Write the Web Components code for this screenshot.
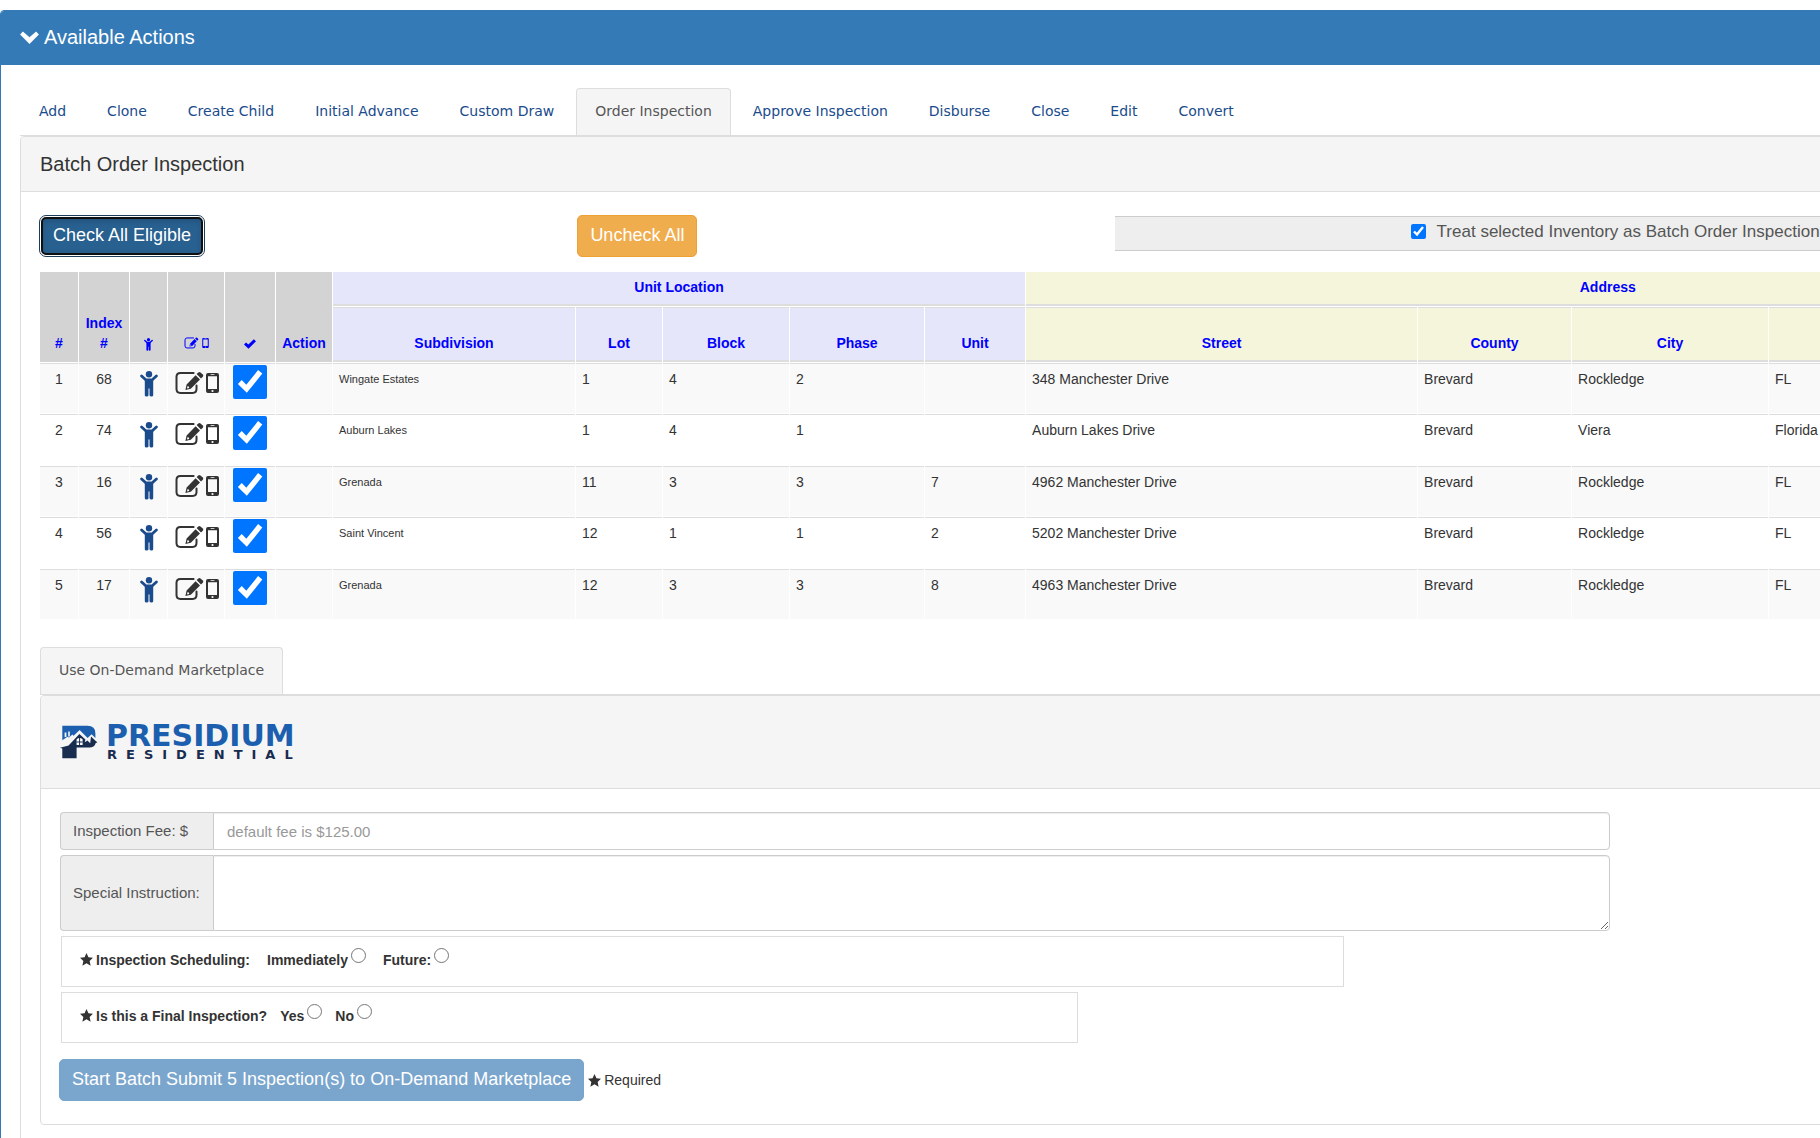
<!DOCTYPE html>
<html lang="en">
<head>
<meta charset="utf-8">
<title>Available Actions</title>
<style>
    html, body {
        height: 100%;
    }

    body {
        margin: 0;
        overflow: hidden;
        background: #fff;
        color: #333;
        font: 14px/20px "Liberation Sans", Arial, sans-serif;
    }
</style>
</head>
<body>
<batch-page></batch-page>

<script>
/* ---------- icons ---------- */
const ICONS = {
    chevron: {
        box: "0 0 19 13",
        art: `<path d="M2.9.4 9.5 6.2 16.1.4 18.9 3.4 9.5 13 .1 3.4Z"/>`
    },
    child: {
        box: "0 0 18 26",
        art: `<circle cx="9" cy="3.3" r="3.2"/>
              <path d="M1.6 5 6 9H12L16.4 5" fill="none" stroke="currentColor" stroke-width="2.8" stroke-linecap="round" stroke-linejoin="round"/>
              <path d="M4.8 8H13.2V24.2Q13.2 25.6 11.4 25.6T9.5 24.2V17.6H8.5V24.2Q8.5 25.6 6.6 25.6T4.8 24.2Z"/>`
    },
    edit: {
        box: "0 0 29 24",
        art: `<path d="M18.6 1.9H5.4Q1.5 1.9 1.5 5.8V18Q1.5 21.9 5.4 21.9H17.6Q21.5 21.9 21.5 18V14.6" fill="none" stroke="currentColor" stroke-width="2" stroke-linecap="round"/>
              <path fill-rule="evenodd" d="M10.4 19 11.6 13.4 20.6 4.2 25 8.4 15.8 17.8ZM12.4 15.2 12 17.4 14.2 17 13.9 15.6Z"/>
              <path d="M21.6 3.1 23.3 1.4Q24.4.4 25.5 1.4L27.8 3.6Q28.8 4.7 27.8 5.7L26 7.4Z"/>`
    },
    phone: {
        box: "0 0 13 20",
        art: `<path fill-rule="evenodd" d="M2 0H11Q13 0 13 2V18Q13 20 11 20H2Q0 20 0 18V2Q0 0 2 0ZM2 3.2V16H11V3.2ZM4.6 1.2V2H8.4V1.2ZM6.5 16.9A1.1 1.1 0 1 0 6.5 19.1 1.1 1.1 0 1 0 6.5 16.9Z"/>`
    },
    check: {
        box: "0 0 12 10",
        art: `<path d="M0 5.4 2 3.4 4.4 5.6 9.8.2 12 2.2 4.5 9.8Z"/>`
    },
    star: {
        box: "0 0 12 12",
        art: `<path d="M6 0 7.8 4 12 4.4 8.9 7.3 9.8 11.8 6 9.5 2.2 11.8 3.1 7.3 0 4.4 4.2 4Z"/>`
    }
};

class AppIcon extends HTMLElement {

    constructor() {
        super();
        this.shadowDOM = this.attachShadow({mode: "open"});
    }

    connectedCallback() {
        const icon = ICONS[this.getAttribute("name")];
        this.shadowDOM.innerHTML = `
        <style>
        :host {
            display: inline-block;
            flex: none;
            width: 13px;
            height: 13px;
        }

        svg {
            display: block;
            width: 100%;
            height: 100%;
            fill: currentColor;
        }
        </style>
        <svg viewBox="${icon.box}" aria-hidden="true">${icon.art}</svg>`;
    }
}

customElements.define("app-icon", AppIcon);

/* ---------- panel with heading ---------- */
class AppPanel extends HTMLElement {

    constructor() {
        super();
        this.shadowDOM = this.attachShadow({mode: "open"});
        this.shadowDOM.innerHTML = `
        <style>
        :host {
            display: block;
            border: 1px solid #ddd;
            border-radius: 4px;
            background: #fff;
        }

        :host([primary]) {
            border-color: #337ab7;
        }

        .heading {
            padding: 16px 19px;
            border-bottom: 1px solid #ddd;
            border-radius: 3px 3px 0 0;
            background: #f5f5f5;
            color: #333;
            font-size: 20px;
            line-height: 22px;
        }

        :host([primary]) .heading {
            padding: 15px 19px 17px;
            border-bottom: 0;
            background: #337ab7;
            color: #fff;
        }

        .body {
            padding: 23px 19px;
        }
        </style>
        <div class="heading"><slot name="heading"></slot></div>
        <div class="body"><slot></slot></div>`;
    }
}

customElements.define("app-panel", AppPanel);

/* ---------- tabs ---------- */
class TabStrip extends HTMLElement {

    constructor() {
        super();
        this.shadowDOM = this.attachShadow({mode: "open"});
        this.shadowDOM.innerHTML = `
        <style>
        :host {
            display: block;
            border-bottom: 1px solid #ddd;
        }

        nav {
            display: flex;
            gap: 3px;
        }
        </style>
        <nav><slot></slot></nav>`;
    }
}

customElements.define("tab-strip", TabStrip);

class TabLink extends HTMLElement {

    constructor() {
        super();
        this.shadowDOM = this.attachShadow({mode: "open"});
        this.shadowDOM.innerHTML = `
        <style>
        :host {
            display: block;
        }

        a {
            display: block;
            padding: 12px 18px 14px;
            border: 1px solid transparent;
            border-bottom: 0;
            border-radius: 4px 4px 0 0;
            color: #1a4b8c;
            font: 14px/20px "DejaVu Sans", Verdana, sans-serif;
            text-decoration: none;
            white-space: nowrap;
        }

        :host([active]) a {
            border-color: #ddd;
            background: #f5f5f5;
            color: #555;
        }
        </style>
        <a href="#"><slot></slot></a>`;
    }
}

customElements.define("tab-link", TabLink);

/* ---------- button ---------- */
class AppButton extends HTMLElement {

    constructor() {
        super();
        this.shadowDOM = this.attachShadow({mode: "open"});
        this.shadowDOM.innerHTML = `
        <style>
        :host {
            display: inline-block;
        }

        button {
            display: block;
            padding: 7px 12px 9px;
            border: 1px solid #2e6da4;
            border-radius: 5px;
            background: #337ab7;
            color: #fff;
            font: 18px/24px "Liberation Sans", Arial, sans-serif;
            white-space: nowrap;
        }

        button:disabled {
            border-color: #77a5cd;
            background: #7aa6ce;
        }

        :host([warning]) button {
            border-color: #eea236;
            background: #f0ad4e;
        }

        /* pressed and focused, with a double ring */
        :host([pressed]) button {
            border: 2px solid #101010;
            padding: 6px 10px 8px;
            background: #286090;
            box-shadow: inset 0 3px 5px rgba(0, 0, 0, .12);
            outline: 1px solid #1d3d5c;
            outline-offset: 1px;
            margin: 2px 1px;
            line-height: 20px;
        }
        </style>
        <button type="button" ${this.hasAttribute("disabled") ? "disabled" : ""}><slot></slot></button>`;
    }
}

customElements.define("app-button", AppButton);

/* ---------- treat-as-batch tick box ---------- */
class BatchToggle extends HTMLElement {

    constructor() {
        super();
        this.shadowDOM = this.attachShadow({mode: "open"});
        this.shadowDOM.innerHTML = `
        <style>
        :host {
            display: flex;
            justify-content: center;
            align-items: center;
            box-sizing: border-box;
            height: 35px;
            margin-top: 1px;
            padding: 0 74px 4px 0;
            border: solid #ccc;
            border-width: 1px 0;
            background: #eee;
            color: #555;
            font-size: 17px;
        }

        label {
            display: flex;
            align-items: center;
            gap: 11px;
            white-space: nowrap;
        }

        input {
            width: 15px;
            height: 15px;
            margin: 0;
        }
        </style>
        <label><input type="checkbox" checked><slot></slot></label>`;
    }
}

customElements.define("batch-toggle", BatchToggle);

/* ---------- inventory table ---------- */
const UNITS = [
    {index: 68, subdivision: "Wingate Estates", lot: 1, block: 4, phase: 2, unit: "", street: "348 Manchester Drive", city: "Rockledge", state: "FL"},
    {index: 74, subdivision: "Auburn Lakes", lot: 1, block: 4, phase: 1, unit: "", street: "Auburn Lakes Drive", city: "Viera", state: "Florida"},
    {index: 16, subdivision: "Grenada", lot: 11, block: 3, phase: 3, unit: 7, street: "4962 Manchester Drive", city: "Rockledge", state: "FL"},
    {index: 56, subdivision: "Saint Vincent", lot: 12, block: 1, phase: 1, unit: 2, street: "5202 Manchester Drive", city: "Rockledge", state: "FL"},
    {index: 17, subdivision: "Grenada", lot: 12, block: 3, phase: 3, unit: 8, street: "4963 Manchester Drive", city: "Rockledge", state: "FL"}
];

const COLUMN_WIDTHS = [38, 50, 37, 56, 50, 56, 242, 86, 126, 134, 100, 391, 153, 196];

class InventoryTable extends HTMLElement {

    constructor() {
        super();
        this.shadowDOM = this.attachShadow({mode: "open"});
    }

    set units(units) {
        this._units = units;
        this.render();
    }

    row(unit, i) {
        return `
        <tr>
            <td class="center">${i + 1}</td>
            <td class="center">${unit.index}</td>
            <td class="icons"><app-icon class="child" name="child"></app-icon></td>
            <td class="icons"><div class="pair"><app-icon class="edit" name="edit"></app-icon><app-icon class="phone" name="phone"></app-icon></div></td>
            <td class="tick"><input type="checkbox" aria-label="Select unit ${unit.index}" checked></td>
            <td></td>
            <td class="small">${unit.subdivision}</td>
            <td>${unit.lot}</td>
            <td>${unit.block}</td>
            <td>${unit.phase}</td>
            <td>${unit.unit}</td>
            <td>${unit.street}</td>
            <td>Brevard</td>
            <td>${unit.city}</td>
            <td>${unit.state}</td>
        </tr>`;
    }

    render() {
        this.shadowDOM.innerHTML = `
        <style>
        :host {
            display: block;
            margin: 14px -1px 27px;
        }

        table {
            width: 100%;
            table-layout: fixed;
            border-collapse: separate;
            border-spacing: 1px;
        }

        th, td {
            box-sizing: border-box;
            padding: 5px 6px;
            text-align: left;
            vertical-align: top;
        }

        th {
            height: 55px;
            padding: 0 0 7px;
            border-top: 1px solid #ddd;
            border-bottom: 2px solid #ddd;
            color: #00f;
            text-align: center;
            vertical-align: bottom;
        }

        th.group {
            height: 34px;
            border-top: 0;
        }

        .item {
            border-top: 0;
            border-bottom-color: #d3d3d3;
            background: #d3d3d3;
        }

        .location {
            background: #e6e6fa;
        }

        .address {
            background: #f5f5dc;
        }

        td {
            height: 50px;
            border-top: 1px solid #ddd;
        }

        tbody tr:nth-child(odd) td {
            background: #f9f9f9;
        }

        tbody tr:nth-child(even) td {
            height: 51px;
        }

        .center {
            text-align: center;
        }

        .small {
            font-size: 11px;
        }

        td.icons {
            padding: 7px 0 0;
            text-align: center;
            line-height: 0;
        }

        .pair {
            display: flex;
            justify-content: center;
            align-items: center;
            gap: 2px;
            padding-left: 2px;
        }

        .child {
            width: 18px;
            height: 26px;
            color: #1a4b8c;
        }

        .edit {
            width: 29px;
            height: 24px;
        }

        .phone {
            width: 13px;
            height: 20px;
        }

        th .child {
            width: 9px;
            height: 13px;
            color: inherit;
            vertical-align: -3px;
        }

        th .pair {
            gap: 3px;
            height: 20px;
            padding: 0;
        }

        th .edit {
            width: 15px;
            height: 12px;
        }

        th .phone {
            width: 7px;
            height: 10px;
        }

        th .check {
            width: 12px;
            height: 10px;
            vertical-align: -1px;
        }

        td.tick {
            padding: 1px 0 0;
            text-align: center;
            line-height: 0;
        }

        input {
            width: 34px;
            height: 34px;
            margin: 0;
        }
        </style>
        <table>
            <colgroup>
                ${COLUMN_WIDTHS.map(width => `<col style="width: ${width}px">`).join("")}
                <col>
            </colgroup>
            <thead>
                <tr>
                    <th class="item" rowspan="2">#</th>
                    <th class="item" rowspan="2">Index<br>#</th>
                    <th class="item" rowspan="2"><app-icon class="child" name="child"></app-icon></th>
                    <th class="item" rowspan="2"><div class="pair"><app-icon class="edit" name="edit"></app-icon><app-icon class="phone" name="phone"></app-icon></div></th>
                    <th class="item" rowspan="2"><app-icon class="check" name="check"></app-icon></th>
                    <th class="item" rowspan="2">Action</th>
                    <th class="group location" colspan="5">Unit Location</th>
                    <th class="group address" colspan="4">Address</th>
                </tr>
                <tr>
                    <th class="location">Subdivision</th>
                    <th class="location">Lot</th>
                    <th class="location">Block</th>
                    <th class="location">Phase</th>
                    <th class="location">Unit</th>
                    <th class="address">Street</th>
                    <th class="address">County</th>
                    <th class="address">City</th>
                    <th class="address">State</th>
                </tr>
            </thead>
            <tbody>${this._units.map((unit, i) => this.row(unit, i)).join("")}</tbody>
        </table>`;
    }
}

customElements.define("inventory-table", InventoryTable);

/* ---------- vendor logo ---------- */
class VendorLogo extends HTMLElement {

    constructor() {
        super();
        this.shadowDOM = this.attachShadow({mode: "open"});
        this.shadowDOM.innerHTML = `
        <style>
        :host {
            display: flex;
            align-items: center;
            gap: 8px;
            height: 60px;
            font-family: "DejaVu Sans", Verdana, sans-serif;
            font-weight: bold;
        }

        svg {
            width: 38px;
            height: 34px;
        }

        .name {
            color: #1c5fae;
            font-size: 30px;
            line-height: 24px;
        }

        .line {
            padding-left: 1px;
            color: #182c50;
            font-size: 13px;
            line-height: 13px;
            letter-spacing: 9px;
        }
        </style>
        <svg viewBox="0 0 38 34" aria-hidden="true">
            <path fill="#1c5fae" d="M2.3.8H27.5Q35.4.8 35.4 8.4V13L31.6 9.2 27.6 13 19.6 5 13.6 10.8 12.4 9.6 9 12.4 7.4 11.8 2.3 15.2Z"/>
            <path fill="#f5f5f5" d="M4.6 7.6H6.4V12H4.6ZM8.2 6.4H9.8V11.4H8.2Z"/>
            <path fill="#182c50" d="M0 22.8 8.6 20.4 19.4 9 25.4 14.6 24.8 17.2 27.4 15.4 30.2 18.2 31 11.6 36 16.2 37.4 17.2 35.6 18.2Q34.4 22.6 29.4 22.6H16.6V33.2H2.3V23.6Z"/>
            <path fill="#fff" d="M16.6 14.2Q19.6 11.6 22.6 14.2V20H16.6Z"/>
            <path stroke="#182c50" d="M19.6 13V20M16.6 17H22.6"/>
        </svg>
        <div>
            <div class="name">PRESIDIUM</div>
            <div class="line">RESIDENTIAL</div>
        </div>`;
    }
}

customElements.define("vendor-logo", VendorLogo);

/* ---------- marketplace form ---------- */
class MarketplaceForm extends HTMLElement {

    constructor() {
        super();
        this.shadowDOM = this.attachShadow({mode: "open"});
        this.shadowDOM.innerHTML = `
        <style>
        :host {
            display: block;
        }

        form {
            display: flex;
            flex-direction: column;
            align-items: flex-start;
            gap: 5px;
        }

        .field {
            display: flex;
            width: 73.5%;
        }

        .field label {
            display: flex;
            align-items: center;
            box-sizing: border-box;
            flex: none;
            width: 153px;
            padding: 0 12px;
            border: 1px solid #ccc;
            border-right: 0;
            border-radius: 4px 0 0 4px;
            background: #eee;
            color: #555;
            font-size: 15px;
            white-space: nowrap;
        }

        .field input, .field textarea {
            box-sizing: border-box;
            flex: 1;
            min-width: 0;
            height: 38px;
            padding: 6px 13px;
            border: 1px solid #ccc;
            border-radius: 0 4px 4px 0;
            background: #fff;
            box-shadow: inset 0 1px 1px rgba(0, 0, 0, .075);
            color: #555;
            font: 15px/20px "Liberation Sans", Arial, sans-serif;
        }

        .field textarea {
            height: 76px;
        }

        .field input::placeholder {
            color: #999;
        }

        fieldset {
            display: flex;
            align-items: center;
            box-sizing: border-box;
            width: 60.8%;
            height: 51px;
            margin: 0 0 0 1px;
            padding: 11px 18px 0;
            border: 1px solid #ddd;
            font-weight: bold;
        }

        fieldset.short {
            width: 48.2%;
        }

        .question, fieldset label, .submit span {
            display: flex;
            align-items: center;
            gap: 3px;
        }

        .question, fieldset label {
            margin-right: 17px;
        }

        .short .question, .short label {
            margin-right: 13px;
        }

        fieldset input {
            width: 15px;
            height: 15px;
            margin: 0 0 8px;
        }

        .submit {
            display: flex;
            align-items: center;
            gap: 4px;
            margin: 11px 0 0 -1px;
        }
        </style>
        <form>
            <div class="field">
                <label for="fee">Inspection Fee: $</label>
                <input id="fee" type="text" placeholder="default fee is $125.00">
            </div>
            <div class="field">
                <label for="instruction">Special Instruction:</label>
                <textarea id="instruction"></textarea>
            </div>
            <fieldset>
                <span class="question"><app-icon name="star"></app-icon>Inspection Scheduling:</span>
                <label>Immediately<input type="radio" name="schedule"></label>
                <label>Future:<input type="radio" name="schedule"></label>
            </fieldset>
            <fieldset class="short">
                <span class="question"><app-icon name="star"></app-icon>Is this a Final Inspection?</span>
                <label>Yes<input type="radio" name="final"></label>
                <label>No<input type="radio" name="final"></label>
            </fieldset>
            <div class="submit">
                <app-button disabled>Start Batch Submit 5 Inspection(s) to On-Demand Marketplace</app-button>
                <span><app-icon name="star"></app-icon>Required</span>
            </div>
        </form>`;
    }
}

customElements.define("marketplace-form", MarketplaceForm);

/* ---------- page ---------- */
class BatchPage extends HTMLElement {

    constructor() {
        super();
        this.shadowDOM = this.attachShadow({mode: "open"});
        this.shadowDOM.innerHTML = `
        <style>
        /* the inventory is wider than the window, so the page runs off to the right */
        :host {
            display: block;
            width: 122.5%;
            padding-top: 10px;
        }

        h1, h2 {
            display: flex;
            align-items: center;
            gap: 5px;
            margin: 0;
            font-size: 20px;
            font-weight: normal;
            line-height: 22px;
        }

        .chevron {
            width: 19px;
            height: 13px;
        }

        .toolbar {
            display: grid;
            grid-template-columns: 1fr 1fr 2fr;
            align-items: start;
        }
        </style>
        <app-panel primary>
            <h1 slot="heading"><app-icon class="chevron" name="chevron"></app-icon>Available Actions</h1>
            <tab-strip>
                <tab-link>Add</tab-link>
                <tab-link>Clone</tab-link>
                <tab-link>Create Child</tab-link>
                <tab-link>Initial Advance</tab-link>
                <tab-link>Custom Draw</tab-link>
                <tab-link active>Order Inspection</tab-link>
                <tab-link>Approve Inspection</tab-link>
                <tab-link>Disburse</tab-link>
                <tab-link>Close</tab-link>
                <tab-link>Edit</tab-link>
                <tab-link>Convert</tab-link>
            </tab-strip>
            <app-panel>
                <h2 slot="heading">Batch Order Inspection</h2>
                <div class="toolbar">
                    <div><app-button pressed>Check All Eligible</app-button></div>
                    <div><app-button warning>Uncheck All</app-button></div>
                    <batch-toggle>Treat selected Inventory as Batch Order Inspection</batch-toggle>
                </div>
                <inventory-table></inventory-table>
                <tab-strip>
                    <tab-link active>Use On-Demand Marketplace</tab-link>
                </tab-strip>
                <app-panel>
                    <vendor-logo slot="heading"></vendor-logo>
                    <marketplace-form></marketplace-form>
                </app-panel>
            </app-panel>
        </app-panel>`;
        this.shadowDOM.querySelector("inventory-table").units = UNITS;
    }
}

customElements.define("batch-page", BatchPage);
</script>
</body>
</html>
